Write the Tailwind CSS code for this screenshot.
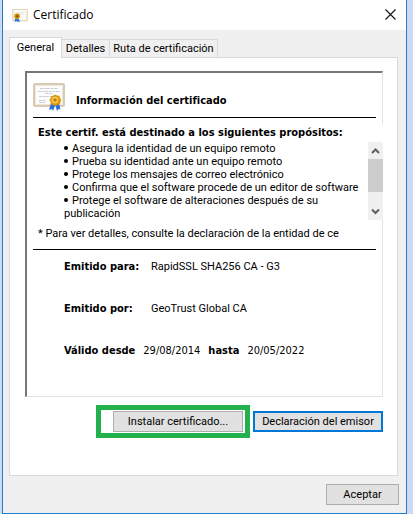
<!DOCTYPE html>
<html lang="es">
<head>
<meta charset="utf-8">
<title>Certificado</title>
<script src="https://cdn.jsdelivr.net/npm/@tailwindcss/browser@4"></script>
</head>
<body class="min-h-screen bg-[#cddaf0] pl-[2px] pr-[6px] text-[11px] leading-[13px] text-black font-['Roboto','Noto_Sans',sans-serif]">
<main class="flex min-h-screen flex-col border-x border-b border-[#1a80d0] bg-[#f0f0f0]">
  <header class="flex h-[30px] items-center bg-white pl-[9px] pr-[10px]">
    <svg class="h-[13px] w-[16px]" viewBox="0 0 32 27" aria-hidden="true">
      <rect x="1" y="1" width="30" height="23" rx="1" fill="#fbfaf5" stroke="#e0d3b8" stroke-width="2.5"/>
      <path d="M14 7h12M16 11h8" stroke="#d5dce6" stroke-width="1.500"/>
      <path d="M6 17l-1 10 4-2 1 2 2-9z M12 17l4 10-4-1-2 1z" fill="#2f74dd"/>
      <circle cx="10" cy="15" r="6" fill="#d9960c"/><circle cx="10" cy="15" r="2.500" fill="#8a5504"/>
    </svg>
    <h1 class="ml-[5px] flex-1 text-[12px] leading-4 font-['Open_Sans','Noto_Sans',sans-serif]">Certificado</h1>
    <button type="button" aria-label="Cerrar" class="mb-[2px] size-[11px]">
      <svg class="size-[11px]" viewBox="0 0 11 11" aria-hidden="true"><path d="M.5.5l10 10M10.500.5l-10 10" stroke="#111" stroke-width="1.1" fill="none"/></svg>
    </button>
  </header>
  <nav class="flex items-end px-[6px] pt-[7px]" role="tablist">
    <button type="button" role="tab" aria-selected="true" class="relative z-10 -mb-px h-[21px] w-[53px] border border-b-0 border-[#d9d9d9] bg-white pb-px">General</button>
    <button type="button" role="tab" class="h-[18px] w-[48px] border-t border-r border-[#d9d9d9]">Detalles</button>
    <button type="button" role="tab" class="h-[18px] w-[108px] border-t border-r border-[#d9d9d9]">Ruta de certificación</button>
  </nav>
  <section class="mr-[8px] ml-[6px] border border-[#d9d9d9] bg-white pt-[13px] pr-[14px] pb-[37px] pl-[15px]">
    <div class="border-t-2 border-l-2 border-r border-b border-t-[#777] border-l-[#777] border-r-[#e3e3e3] border-b-[#e3e3e3] pb-[39px]">
      <div class="mr-[6px] ml-[6px] flex h-[45px] items-start border-b border-black pt-[10px]">
        <svg class="h-[29px] w-[32px]" viewBox="0 0 32 29" aria-hidden="true">
          <rect x="1" y="1" width="30" height="22" rx="1" fill="#fcfcfb" stroke="#d8cbb4" stroke-width="2"/>
          <rect x="2.500" y="2.500" width="27" height="19" fill="none" stroke="#eee7d9"/>
          <path d="M7 5.500h18M5 8.500h22M12 10.500h8M6 13.500h17M6 17.500h7M6 19.500h6" stroke="#c8cddb" stroke-width="1" stroke-dasharray="3 .6"/>
          <path d="M18 20l-2 7 3-1 1 2 3-8z M22 21l2 7 1.500-2 2 .5-2-8z" fill="#2b6fe0"/>
          <path d="M22 11.500l2 1 2.300.2.700 2.200 1.300 1.800-.8 2.100-.4 2.300-2.300.6-2.300 1.300-2.200-1-2.300-.6-.5-2.300-1-2 1.200-2 .7-2.200 2.300-.3z" fill="#d9940c"/>
          <circle cx="22" cy="17" r="3.500" fill="#f6c64a"/><circle cx="22" cy="17" r="1.800" fill="#c27f08"/>
        </svg>
        <h2 class="ml-[11px] mt-[11px] font-bold font-['DejaVu_Sans_Condensed','DejaVu_Sans',sans-serif]">Información del certificado</h2>
      </div>
      <h3 class="relative -mr-px mt-[6px] bg-white pt-[2px] pb-[3px] pl-[11px] font-bold font-['DejaVu_Sans_Condensed','DejaVu_Sans',sans-serif]">Este certif. está destinado a los siguientes propósitos:</h3>
      <div class="flex h-[78px]">
        <ul class="ml-[37px] flex-1">
          <li><span class="mr-[4px] mb-[2px] inline-block size-[4px] rounded-full bg-black"></span>Asegura la identidad de un equipo remoto</li>
          <li><span class="mr-[4px] mb-[2px] inline-block size-[4px] rounded-full bg-black"></span>Prueba su identidad ante un equipo remoto</li>
          <li><span class="mr-[4px] mb-[2px] inline-block size-[4px] rounded-full bg-black"></span>Protege los mensajes de correo electrónico</li>
          <li><span class="mr-[4px] mb-[2px] inline-block size-[4px] rounded-full bg-black"></span>Confirma que el software procede de un editor de software</li>
          <li><span class="mr-[4px] mb-[2px] inline-block size-[4px] rounded-full bg-black"></span>Protege el software de alteraciones después de su<br>publicación</li>
        </ul>
        <div class="-mr-px flex w-[15px] shrink-0 flex-col bg-[#f0f0f0]">
          <svg class="h-[17px] w-[15px]" viewBox="0 0 15 17" aria-hidden="true"><path d="M4 11l3.500-3.500L11 11" fill="none" stroke="#606060" stroke-width="2"/></svg>
          <div class="h-[33px] bg-[#cdcdcd]"></div>
          <svg class="mt-auto h-[17px] w-[15px]" viewBox="0 0 15 17" aria-hidden="true"><path d="M4 6.500L7.500 10 11 6.500" fill="none" stroke="#606060" stroke-width="2"/></svg>
        </div>
      </div>
      <p class="mr-[6px] ml-[6px] border-b border-black pt-[7px] pb-[9px] pl-[5px]">* Para ver detalles, consulte la declaración de la entidad de ce</p>
      <dl class="mt-[10px] ml-[37px] grid grid-cols-[87px_1fr] gap-y-[29px]">
        <dt class="font-bold font-['DejaVu_Sans_Condensed','DejaVu_Sans',sans-serif]">Emitido para:</dt><dd>RapidSSL SHA256 CA - G3</dd>
        <dt class="font-bold font-['DejaVu_Sans_Condensed','DejaVu_Sans',sans-serif]">Emitido por:</dt><dd>GeoTrust Global CA</dd>
      </dl>
      <p class="mt-[29px] ml-[37px] flex gap-[8px] font-['DejaVu_Sans_Condensed','DejaVu_Sans',sans-serif]"><b>Válido desde</b><span>29/08/2014</span><b>hasta</b><span>20/05/2022</span></p>
    </div>
    <div class="mt-[8px] flex items-center justify-end gap-[3px]">
      <div class="flex border-[5px] border-[#22b14c] py-px pr-[2px] pl-[12px]">
        <button type="button" class="h-[21px] w-[130px] border border-[#adadad] bg-[#e1e1e1]">Instalar certificado...</button>
      </div>
      <button type="button" class="h-[21px] w-[130px] border-2 border-[#0078d7] bg-[#e1e1e1]">Declaración del emisor</button>
    </div>
  </section>
  <footer class="flex justify-end pt-[8px] pr-[7px] pb-[8px]">
    <button type="button" class="h-[21px] w-[73px] border border-[#adadad] bg-[#e1e1e1]">Aceptar</button>
  </footer>
</main>
</body>
</html>
